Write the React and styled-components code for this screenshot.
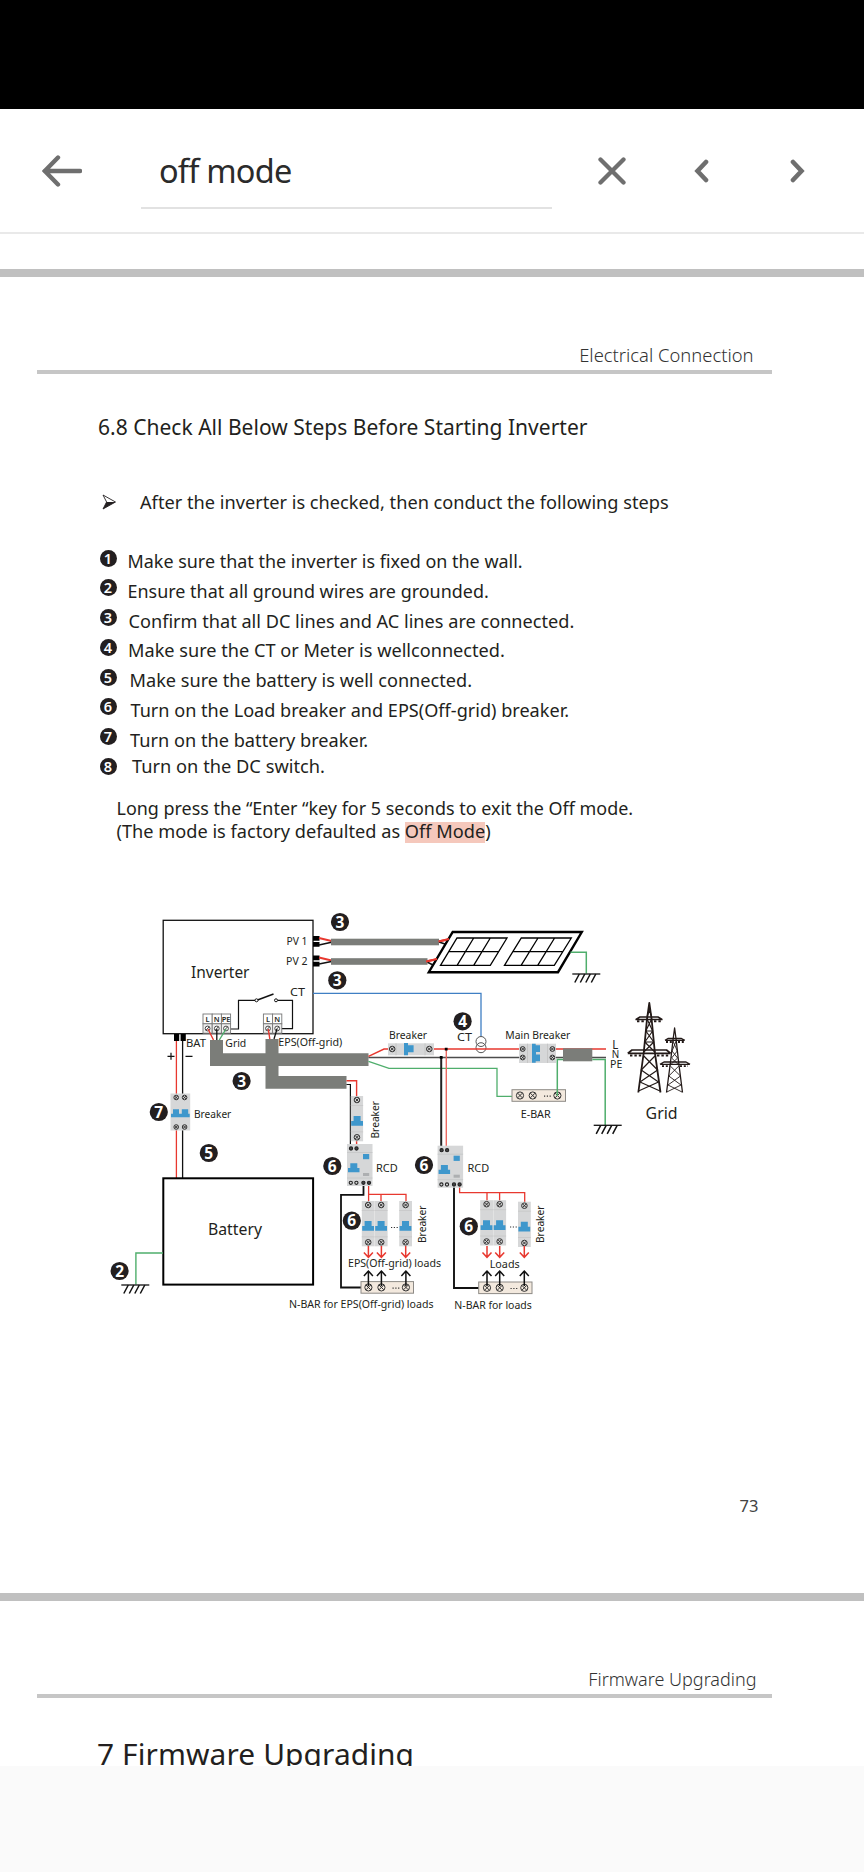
import React from "react";
import styled, { createGlobalStyle } from "styled-components";

const GlobalStyle = createGlobalStyle`
  * {
    box-sizing: border-box;
  }

  body {
    margin: 0;
    background: #fafafa;
    color: #231f20;
    font-family: "Noto Sans", "Open Sans", sans-serif;
  }
`;

const Screen = styled.div`
  width: 864px;
  height: 1872px;
  display: flex;
  flex-direction: column;
  overflow: hidden;
`;

const StatusBar = styled.div`
  height: 109px;
  background: #000;
`;

const Toolbar = styled.div`
  height: 125px;
  display: flex;
  align-items: center;
  background: #fff;
  border-bottom: 2px solid #e9e9e9;
`;

const ToolButton = styled.button`
  width: ${({ $width }) => $width}px;
  height: 60px;
  margin-left: ${({ $gap }) => $gap}px;
  padding: 0;
  border: 0;
  background: none;
  display: flex;
  align-items: center;
  justify-content: center;
`;

const SearchField = styled.div`
  width: 411px;
  height: 76px;
  margin: 1px 0 0 59px;
  padding: 15px 0 0 18px;
  border-bottom: 2px solid #e2e2e2;
  font-size: 32.5px;
  line-height: 46px;
  letter-spacing: -0.8px;
  color: #2b2b2b;
`;

const PageGap = styled.div`
  height: 8px;
  background: #c0c0c0;
`;

const Page = styled.div`
  height: ${({ $height }) => $height}px;
  display: flex;
  flex-direction: column;
  background: #fff;
  overflow: hidden;
`;

const RunningHead = styled.div`
  margin: 0 92px 0 37px;
  padding: 63px ${({ $inset }) => $inset}px 0 0;
  border-bottom: 4px solid #c6c6c6;
  text-align: right;
  font-size: ${({ $size }) => $size}px;
  font-weight: 300;
  line-height: 30px;
  color: #333;
`;

const Heading = styled.h2`
  margin: 38px 0 0 98px;
  font-size: 21px;
  font-weight: 400;
  line-height: 30px;
  letter-spacing: 0.02px;
`;

const Chapter = styled.h1`
  margin: 35.5px 0 0 97px;
  font-size: 29.9px;
  font-weight: 400;
  line-height: 40px;
  letter-spacing: 0.1px;
  white-space: nowrap;
`;

const Intro = styled.p`
  display: flex;
  align-items: center;
  gap: 24px;
  margin: 45px 0 29px 102px;
  font-size: 18.2px;
  line-height: 30px;
`;

const Steps = styled.ol`
  margin: 0;
  padding: 0 0 0 99.5px;
  list-style: none;
`;

const Step = styled.li`
  display: flex;
  height: ${({ $tight }) => ($tight ? 26.5 : 29.75)}px;
  font-size: ${({ $size }) => $size}px;
  line-height: 30px;
`;

const Badge = styled.span`
  flex: none;
  width: 17px;
  height: 17px;
  margin: ${({ $drop }) => ($drop ? 6.5 : 3.5)}px ${({ $gap }) => $gap}px 0 0;
  border-radius: 50%;
  background: #231f20;
  color: #fff;
  font-size: 14.5px;
  font-weight: 600;
  line-height: 17px;
  text-align: center;
`;

const Note = styled.p`
  margin: 16.5px 0 0 116.5px;
  font-size: 17.95px;
  line-height: 22.3px;
`;

const NoteLine = styled.span`
  display: block;
  font-size: ${({ $size }) => $size}px;
`;

const Hit = styled.mark`
  background: linear-gradient(#f5c8bc, #f5c8bc) 0 100% / 100% 21px no-repeat;
  color: inherit;
`;

const Diagram = styled.svg`
  display: block;
  flex: none;
  width: 600px;
  height: 410px;
  margin: 68px 0 0 100px;

  text {
    fill: #231f20;
  }
`;

const DotNumber = styled.text`
  && {
    fill: #fff;
  }
`;

const PageNumber = styled.div`
  margin: 171px 105.5px 0 0;
  text-align: right;
  font-size: 16.5px;
  line-height: 30px;
  color: #444;
`;

const RED = "#e8382f";
const GREEN = "#4fae6c";
const BLUE = "#3f7fc4";
const DEVICE = "#3e97cc";
const CABLE = "#7b7d79";
const INK = "#111";

const steps = [
  { text: "Make sure that the inverter is fixed on the wall.", size: 17.95, gap: 11 },
  { text: "Ensure that all ground wires are grounded.", size: 17.95, gap: 11 },
  { text: "Confirm that all DC lines and AC lines are connected.", size: 18.15, gap: 12 },
  { text: "Make sure the CT or Meter is wellconnected.", size: 18.15, gap: 11.5 },
  { text: "Make sure the battery is well connected.", size: 18.15, gap: 13 },
  { text: "Turn on the Load breaker and EPS(Off-grid) breaker.", size: 18.1, gap: 14 },
  { text: "Turn on the battery breaker.", size: 18.2, gap: 13.5, tight: true },
  { text: "Turn on the DC switch.", size: 18.25, gap: 15.5, drop: true },
];

const Label = ({ x, y, w, size = 10.2, children }) => (
  <text x={x} y={y} fontSize={size} textLength={w} lengthAdjust="spacingAndGlyphs">
    {children}
  </text>
);

const SideLabel = ({ x, y, w }) => (
  <text
    transform={`translate(${x} ${y}) rotate(-90)`}
    fontSize="10.2"
    textLength={w}
    lengthAdjust="spacingAndGlyphs"
  >
    Breaker
  </text>
);

const Dot = ({ x, y, n }) => (
  <g>
    <circle cx={x} cy={y} r="9.1" fill="#231f20" />
    <DotNumber x={x} y={y + 5.5} fontSize="15.5" fontWeight="700" textAnchor="middle">
      {n}
    </DotNumber>
  </g>
);

const Wire = ({ d, c = INK, w = 1.2 }) => <path d={d} stroke={c} strokeWidth={w} fill="none" />;

const Screw = ({ x, y, r = 2.8 }) => (
  <g stroke="#333" strokeWidth="1" fill="#d4d4d4">
    <circle cx={x} cy={y} r={r} />
    <path
      d={`M${x - r * 0.6} ${y - r * 0.6}L${x + r * 0.6} ${y + r * 0.6}M${x + r * 0.6} ${y - r * 0.6}L${x - r * 0.6} ${y + r * 0.6}`}
    />
  </g>
);

const Earth = ({ x, y }) => (
  <g stroke={INK} fill="none">
    <path d={`M${x} ${y}h28`} strokeWidth="1.3" />
    <path
      d={`M${x + 7} ${y}l-4.5 8.5M${x + 12.5} ${y}l-4.5 8.5M${x + 18} ${y}l-4.5 8.5M${x + 23.5} ${y}l-4.5 8.5`}
      strokeWidth="1.5"
    />
  </g>
);

const Breaker = ({ x, y, h = 45.3, w = 12.8 }) => (
  <g>
    <rect x={x} y={y} width={w} height={h} fill="#d6d7d8" />
    <path d={`M${x} ${y + 9.5}h${w}M${x} ${y + h - 9.5}h${w}`} stroke="#c6c7c8" strokeWidth="0.8" />
    <Screw x={x + w / 2} y={y + 4} />
    <Screw x={x + w / 2} y={y + h - 4} />
    <path d={`M${x + 0.4} ${y + 29.7}v-4.7h2.4v-5h7v5h2.4v4.7z`} fill={DEVICE} />
  </g>
);

const Rcd = ({ x, y }) => (
  <g>
    <rect x={x} y={y} width="25.5" height="42" fill="#d6d7d8" />
    <path d={`M${x} ${y + 8.5}h25.5M${x} ${y + 34}h25.5`} stroke="#c4c5c6" strokeWidth="0.8" />
    <g stroke="#222" strokeWidth="1.1">
      <circle cx={x + 4} cy={y + 4.5} r="1.6" fill="#444" />
      <circle cx={x + 9.5} cy={y + 4.5} r="1.6" fill="#444" />
      <circle cx={x + 3.8} cy={y + 38.8} r="1.6" fill="none" />
      <circle cx={x + 9.4} cy={y + 38.8} r="1.6" fill="none" />
      <circle cx={x + 16.4} cy={y + 38.8} r="1.6" fill="#444" />
      <circle cx={x + 22} cy={y + 38.8} r="1.6" fill="#444" />
    </g>
    <path d={`M${x + 1} ${y + 28.2}v-4.2h2.3v-4.8h7v4.8h2.2v4.2z`} fill={DEVICE} />
    <rect x={x + 16} y={y + 10} width="6.2" height="5.2" fill={DEVICE} />
    <rect x={x + 16} y={y + 29} width="6.2" height="3" fill="#adafb1" />
  </g>
);

const Dots = ({ x, y }) => (
  <path d={`M${x} ${y}h7`} stroke="#333" strokeWidth="1.2" strokeDasharray="1.2 1.6" />
);

const Bar = ({ x, y, w, screws, dots }) => (
  <g>
    <rect x={x} y={y} width={w} height="11.6" fill="#f3e9de" stroke="#8d8a86" strokeWidth="1" />
    {screws.map((s) => (
      <g key={s} stroke="#333" strokeWidth="1" fill="none">
        <circle cx={s} cy={y + 5.8} r="3.6" />
        <path d={`M${s - 2.4} ${y + 3.4}l4.8 4.8M${s + 2.4} ${y + 3.4}l-4.8 4.8`} />
      </g>
    ))}
    <Dots x={dots} y={y + 6.5} />
  </g>
);

const Down = ({ x }) => <Wire d={`M${x} 1246v11M${x - 4.5} 1252.5l4.5 4.8l4.5 -4.8`} c={RED} w={1.5} />;

const Up = ({ x }) => <Wire d={`M${x} 1286v-14M${x - 4.5} 1276l4.5 -5l4.5 5`} w={1.5} />;

const Terminal = ({ x, names }) => (
  <g>
    {names.map((name, i) => (
      <g key={name}>
        <rect x={x + i * 9.2} y="1014" width="9.2" height="9.8" fill="#fff" stroke="#777" strokeWidth="0.9" />
        <rect x={x + i * 9.2} y="1023.8" width="9.2" height="9.4" fill="#eee" stroke="#777" strokeWidth="0.9" />
        <text x={x + i * 9.2 + 4.6} y="1021.8" fontSize="7.4" fontWeight="600" textAnchor="middle">
          {name}
        </text>
        <circle cx={x + i * 9.2 + 4.6} cy="1028.5" r="2.4" fill="#fff" stroke="#333" strokeWidth="0.9" />
        <path d={`M${x + i * 9.2 + 3} 1030.2l3.2 -3.4`} stroke="#333" strokeWidth="0.9" />
      </g>
    ))}
  </g>
);

const Pylons = () => (
  <g stroke="#231a18" fill="none" strokeLinejoin="round">
    <path
      strokeWidth="1.8"
      d="M638.3 1092.5L643.8 1052L647 1019L649.3 1003L651.6 1019L654.8 1052L660.5 1092.5"
    />
    <path
      strokeWidth="1.2"
      d="M647 1019L652.7 1031L645.8 1031L651.6 1019M645.8 1031L653.8 1042L644.8 1042L652.7 1031M644.8 1042L654.8 1052M653.8 1042L643.8 1052M643.8 1056L657.6 1070L640 1082L660 1091M654.9 1056L641.2 1070L658.5 1082L638.5 1091M648.5 1008L651.5 1016M650.2 1008L647.2 1016"
    />
    <path strokeWidth="1.5" d="M635.5 1019.6H662.5M635.5 1019.6L640 1017H658L662.5 1019.6" />
    <path strokeWidth="1.7" d="M627.7 1053.4H670.7M627.7 1053.4L632 1050H666.5L670.7 1053.4" />
    <path strokeWidth="2" strokeDasharray="2.4 2" d="M637 1021.2h8M654 1021.2h8M630 1055.4h12M657 1055.4h12" />
    <path
      strokeWidth="1.3"
      d="M666.5 1092.5L670.5 1062L673 1040L674.6 1028L676.2 1040L678.6 1062L682.5 1092.5"
    />
    <path
      strokeWidth="0.9"
      d="M673 1041L677.3 1051L671.6 1058L678.8 1065M676.2 1041L672 1051L677.6 1058L670.3 1065M670.3 1066L680.5 1076L668 1085L682 1092M678.8 1066L668.8 1076L681 1085L666.8 1092"
    />
    <path strokeWidth="1.3" d="M665 1040.4H684.8M665 1040.4L668 1038.5H681.5L684.8 1040.4" />
    <path strokeWidth="1.4" d="M660 1064.4H690M660 1064.4L664 1062H686L690 1064.4" />
    <path strokeWidth="1.8" strokeDasharray="2 1.8" d="M666 1042h6M678 1042h6M662 1066.2h8M680 1066.2h8" />
  </g>
);

const WiringDiagram = () => (
  <Diagram viewBox="100 910 600 410">
    {/* inverter */}
    <rect x="163.2" y="920.3" width="149.8" height="113.4" fill="#fff" stroke={INK} strokeWidth="1.3" />
    <Label x={191} y={978} w={58.5} size={16}>Inverter</Label>
    <Label x={286.5} y={945} w={21}>PV 1</Label>
    <Label x={286} y={965} w={21.5}>PV 2</Label>
    <Label x={290} y={996} w={15} size={11}>CT</Label>
    <Wire d="M230.5 1029H238.5V1000.3H255M277.5 1000.3H292.5V1028.6H281" />
    <Wire d="M257.5 1000L273.5 994" w={1.4} />
    <circle cx="256.5" cy="1000.3" r="1.5" fill="#fff" stroke={INK} />
    <circle cx="276" cy="1000.3" r="1.5" fill="#fff" stroke={INK} />
    <Terminal x={203} names={["L", "N", "PE"]} />
    <Terminal x={263.4} names={["L", "N"]} />

    {/* photovoltaic strings */}
    <path
      d="M313 936h6.5v4.7h-6.5zM313 942h6.5v4.7h-6.5zM313 955.5h6.5v4.7h-6.5zM313 961.7h6.5v4.7h-6.5zM174 1034h5.2v7h-5.2zM180.6 1034h5.2v7h-5.2z"
      fill="#000"
    />
    <Wire d="M319 938L331.5 941M319 957.5L331.5 960.5M438.5 941.5L450 939M426 961.5L438 959" c={RED} w={1.8} />
    <Wire d="M319 945L331.5 942.2M319 964L331.5 961.5M439 942L445 944M427 962L433 965" w={1.6} />
    <rect x="331" y="938.7" width="108" height="6.6" fill={CABLE} />
    <rect x="331" y="958.2" width="96.5" height="6.6" fill={CABLE} />
    <path d="M452.7 932H581.8L558 972.2H428.8Z" fill="#fff" stroke="#000" strokeWidth="2.4" />
    <Wire d="M438.5 941.5L449 939M426 961.5L437 959" c={RED} w={1.8} />
    <path
      d="M457 938H507L490.3 965.3H440.5ZM473.7 938L457.1 965.3M490.3 938L473.7 965.3M448.7 951.6H498.7M521.3 938H571.3L554.3 965.3H504.5ZM538 938L521.1 965.3M554.6 938L537.7 965.3M513 951.6H562.8"
      fill="none"
      stroke="#000"
      strokeWidth="1.3"
    />
    <Wire d="M570.5 952.2H586.3V973.5" c={GREEN} w={1.5} />
    <Earth x={572.3} y={974} />

    {/* current transformer */}
    <Wire d="M313 993.4H481V1036" c={BLUE} w={1.3} />
    <g fill="none" stroke="#555">
      <circle cx="481" cy="1041.5" r="5" />
      <circle cx="481" cy="1047.7" r="5" />
    </g>
    <Label x={457} y={1041} w={15} size={10.8}>CT</Label>

    {/* battery side */}
    <Label x={186} y={1046.7} w={20}>BAT</Label>
    <Label x={225.3} y={1046.5} w={21}>Grid</Label>
    <Wire d="M167.5 1056.3h7M171 1052.8v7M185.5 1056.3h7" />
    <Wire d="M176.4 1041V1178" c={RED} w={1.3} />
    <Wire d="M182.6 1041V1178" w={1.3} />
    <rect x="170.5" y="1093.5" width="19.7" height="37" fill="#d6d7d8" />
    <Screw x={176.2} y={1097.5} r={2.3} />
    <Screw x={184.6} y={1097.5} r={2.3} />
    <Screw x={176.2} y={1127} r={2.3} />
    <Screw x={184.6} y={1127} r={2.3} />
    <path d="M171 1117.3v-3.6h2v-4.4h6v4.4h2.8v-4.4h6.4v4.4h1.5v3.6z" fill={DEVICE} />
    <Label x={194} y={1118} w={37.3}>Breaker</Label>
    <rect x="163.3" y="1178.3" width="149.8" height="106.3" fill="#fff" stroke="#000" strokeWidth="2" />
    <Label x={208} y={1235.3} w={54} size={16}>Battery</Label>
    <Wire d="M163 1253H135.9V1284.5" c={GREEN} w={1.4} />
    <Earth x={121.3} y={1285} />

    {/* cables */}
    <path
      d="M210 1040h13v13.3h42.5v-14.3h13v14.3h90v12.7h-90v10h68v12.8h-81v-22.8h-55.5z"
      fill={CABLE}
    />
    <Label x={278.3} y={1046.3} w={64}>EPS(Off-grid)</Label>
    <Wire d="M208 1029L213.5 1040M268.3 1029L269.8 1039" c={RED} w={1.4} />
    <Wire d="M216.8 1029V1040M277 1029L274 1039" w={1.3} />
    <Wire d="M226 1029L219.3 1040" c={GREEN} w={1.4} />

    {/* grid line */}
    <Wire d="M368.5 1057.5H606" c="#4d4d4d" w={1.3} />
    <Wire d="M368.5 1056.3L384 1049H606" c={RED} w={1.4} />
    <Wire d="M368.5 1061.3L389 1068.4H497V1096.3H512" c={GREEN} w={1.3} />
    <Wire d="M441.2 1057.5V1147" c="#222" w={2} />
    <Wire d="M446.3 1049V1147" c="#ec6a62" w={1.4} />
    <path d="M444.8 1047.7h2.8v2.8h-2.8zM439.8 1056h2.8v2.8h-2.8z" fill="#000" />
    <rect x="388" y="1043.3" width="46" height="12" fill="#d6d7d8" />
    <path d="M396 1043.3v12M425 1043.3v12" stroke="#c2c2c2" strokeWidth="0.8" />
    <Screw x={392.2} y={1049} />
    <Screw x={429.3} y={1049} />
    <path d="M404 1043h4v2.3h5.6v7h-5.6v2.9h-4z" fill={DEVICE} />
    <Label x={389} y={1039} w={38}>Breaker</Label>
    <Label x={505.3} y={1039} w={65}>Main Breaker</Label>
    <rect x="519" y="1043.7" width="37" height="19.3" fill="#d6d7d8" />
    <path d="M527.5 1043.7v19.3M547.5 1043.7v19.3" stroke="#c2c2c2" strokeWidth="0.8" />
    <Screw x={522.7} y={1049} r={2.4} />
    <Screw x={552.4} y={1049} r={2.4} />
    <Screw x={522.7} y={1057.5} r={2.4} />
    <Screw x={552.4} y={1057.5} r={2.4} />
    <path d="M532 1043.7h3.7v1.5h4.3v6.8h-4v2.6h4v6.7h-4.3v1.5h-3.7z" fill={DEVICE} />
    <rect x="563" y="1048.3" width="29.3" height="13" fill={CABLE} />
    <Bar x={512} y={1089.7} w={53.5} screws={[520, 532.7, 557.4]} dots={544} />
    <Wire d="M557.3 1096V1059.6H563M592.3 1059.6H605.2V1125" c={GREEN} w={1.5} />
    <Label x={520.7} y={1117.6} w={30}>E-BAR</Label>
    <Earth x={593.7} y={1125.3} />
    <Label x={612.3} y={1048.7} w={6} size={11.8}>L</Label>
    <Label x={611.7} y={1058} w={7.5} size={10}>N</Label>
    <Label x={610} y={1068} w={12.3}>PE</Label>
    <Pylons />
    <Label x={645.6} y={1119} w={32} size={15.8}>Grid</Label>

    {/* off-grid loads */}
    <Wire d="M346.5 1080.7H356.6V1146" c={RED} w={1.4} />
    <Wire d="M346.5 1084.5H350.4V1145" w={1.2} />
    <Breaker x={350.8} y={1096} w={12.3} />
    <SideLabel x={379} y={1138.5} w={37.5} />
    <Wire d="M363.5 1184V1194.8H341V1287.5H361" w={1.8} />
    <Wire d="M368.6 1184V1204M368.6 1194.3H406V1204M381 1194.3V1204" c={RED} w={1.3} />
    <Rcd x={347} y={1144} />
    <Label x={376} y={1172} w={21.7}>RCD</Label>
    <Breaker x={361.8} y={1201} />
    <Breaker x={374.8} y={1201} />
    <Breaker x={399.2} y={1201} />
    <Dots x={391} y={1227.5} />
    <SideLabel x={426.2} y={1243} w={37.5} />
    <Down x={368.4} />
    <Down x={381.4} />
    <Down x={405.7} />
    <Label x={348} y={1267.3} w={93}>EPS(Off-grid) loads</Label>
    <Bar x={361} y={1281.6} w={52.5} screws={[368.4, 381.4, 405.9]} dots={392.5} />
    <Up x={368.4} />
    <Up x={381.4} />
    <Up x={405.9} />
    <Label x={289} y={1308} w={144.5}>N-BAR for EPS(Off-grid) loads</Label>

    {/* backed-up loads */}
    <Wire d="M454 1186V1288H479" w={1.9} />
    <Wire d="M459.6 1186V1192.6H524.7V1204M487 1192.6V1203M499.6 1192.6V1203" c={RED} w={1.3} />
    <Rcd x={437.6} y={1145.7} />
    <Label x={467.5} y={1172} w={21.7}>RCD</Label>
    <Breaker x={480.2} y={1200.2} />
    <Breaker x={493.3} y={1200.2} />
    <Breaker x={518} y={1201.7} />
    <Dots x={510} y={1227} />
    <SideLabel x={544.3} y={1243} w={37.5} />
    <Down x={487} />
    <Down x={499.7} />
    <Down x={524.3} />
    <Label x={489.7} y={1268} w={30}>Loads</Label>
    <Bar x={478.7} y={1282} w={53.3} screws={[487, 499.7, 524.3]} dots={510.5} />
    <Up x={487} />
    <Up x={499.7} />
    <Up x={524.3} />
    <Label x={454.3} y={1308.6} w={77.5}>N-BAR for loads</Label>

    <Dot x={340} y={922} n={3} />
    <Dot x={337.3} y={980.3} n={3} />
    <Dot x={241.6} y={1081} n={3} />
    <Dot x={462.6} y={1021.3} n={4} />
    <Dot x={158.8} y={1112} n={7} />
    <Dot x={208.8} y={1153} n={5} />
    <Dot x={119.6} y={1271} n={2} />
    <Dot x={332.3} y={1166} n={6} />
    <Dot x={424} y={1165} n={6} />
    <Dot x={351.8} y={1220.7} n={6} />
    <Dot x={468.8} y={1226.3} n={6} />
  </Diagram>
);

const icon = { fill: "none", stroke: "#6f6f6f", strokeLinecap: "round" };

const App = () => (
  <Screen>
    <GlobalStyle />
    <StatusBar />
    <Toolbar>
      <ToolButton $gap={42} $width={40} aria-label="Back">
        <svg width="40" height="32" viewBox="0 0 40 32" strokeWidth="4.4" {...icon}>
          <path d="M16 2.5L2.8 16L16 29.5M2.8 16H38" />
        </svg>
      </ToolButton>
      <SearchField>off mode</SearchField>
      <ToolButton $gap={46} $width={28} aria-label="Clear">
        <svg width="28" height="28" viewBox="0 0 28 28" strokeWidth="4.3" {...icon}>
          <path d="M2.5 2.5L25.5 25.5M25.5 2.5L2.5 25.5" />
        </svg>
      </ToolButton>
      <ToolButton $gap={68} $width={15} aria-label="Previous">
        <svg width="15" height="24" viewBox="0 0 15 24" strokeWidth="4.6" {...icon}>
          <path d="M12 3L3.5 12L12 21" />
        </svg>
      </ToolButton>
      <ToolButton $gap={81} $width={15} aria-label="Next">
        <svg width="15" height="24" viewBox="0 0 15 24" strokeWidth="4.6" {...icon}>
          <path d="M3 3L11.5 12L3 21" />
        </svg>
      </ToolButton>
    </Toolbar>

    <Page $height={35} />
    <PageGap />
    <Page $height={1316}>
      <RunningHead $inset={18.5} $size={18.4}>Electrical Connection</RunningHead>
      <Heading>6.8 Check All Below Steps Before Starting Inverter</Heading>
      <Intro>
        <svg width="14" height="16" viewBox="0 0 14 16">
          <path d="M1 1L13.5 8L1 15L4.6 8Z" fill="#fff" stroke="#231f20" strokeWidth="0.9" />
          <path d="M4.6 8H13.5L1 15Z" fill="#231f20" />
        </svg>
        After the inverter is checked, then conduct the following steps
      </Intro>
      <Steps>
        {steps.map((step, i) => (
          <Step key={step.text} $size={step.size} $tight={step.tight}>
            <Badge $gap={step.gap} $drop={step.drop}>{i + 1}</Badge>
            {step.text}
          </Step>
        ))}
      </Steps>
      <Note>
        <NoteLine $size={17.97}>Long press the “Enter “key for 5 seconds to exit the Off mode.</NoteLine>
        <NoteLine $size={18.18}>
          (The mode is factory defaulted as <Hit>Off Mode</Hit>)
        </NoteLine>
      </Note>
      <WiringDiagram />
      <PageNumber>73</PageNumber>
    </Page>
    <PageGap />
    <Page $height={165}>
      <RunningHead $inset={15.5} $size={18}>Firmware Upgrading</RunningHead>
      <Chapter>7 Firmware Upgrading</Chapter>
    </Page>
  </Screen>
);

export default App;
